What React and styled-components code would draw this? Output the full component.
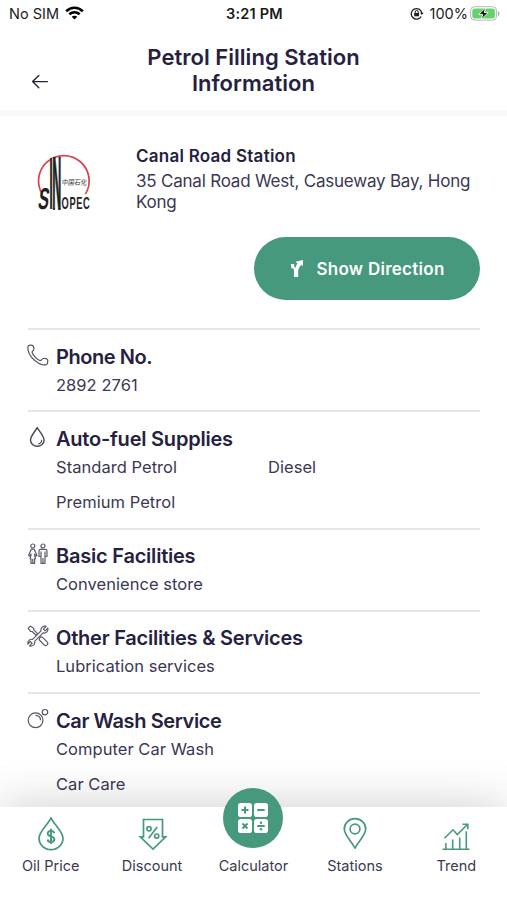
import styled, { createGlobalStyle } from "styled-components"

const GlobalStyle = createGlobalStyle`
	* {
		box-sizing: border-box;
	}
	body {
		margin: 0;
		background: #fff;
		font-family: Inter, "Noto Sans", sans-serif;
		color: #25213f;
	}
	h1, h2, h3, p, ul {
		margin: 0;
		padding: 0;
	}
`

const Screen = styled.div`
	width: 507px;
	height: 900px;
	display: flex;
	flex-direction: column;
	overflow: hidden;
	background: #fff;
`

const StatusBar = styled.div`
	height: 28px;
	flex: none;
	display: grid;
	grid-template-columns: 1fr auto 1fr;
	align-items: center;
	padding: 0 7px 2px 9px;
	font-size: 14.5px;
	color: #1b1b1b;
	.side {
		display: flex;
		align-items: center;
		gap: 6px;
	}
	.right {
		justify-content: flex-end;
		gap: 2px;
	}
	.lock {
		margin-right: 4px;
	}
	.time {
		font-weight: 600;
		letter-spacing: 0.2px;
	}
`

const Header = styled.header`
	height: 88px;
	flex: none;
	display: grid;
	grid-template-columns: 80px 1fr 80px;
	border-bottom: 6px solid #f9f9f9;
	h1 {
		padding-top: 16px;
		text-align: center;
		font-size: 22px;
		line-height: 26px;
		font-weight: 600;
		letter-spacing: 0.03px;
	}
`

const BackButton = styled.button`
	border: none;
	background: none;
	padding: 46px 0 0 31px;
	display: flex;
	align-items: flex-start;
	color: #25213f;
`

const Content = styled.main`
	flex: 1;
	min-height: 0;
	overflow: hidden;
	padding: 0 27px 0 28px;
`

const Station = styled.section`
	display: grid;
	grid-template-columns: 108px 1fr;
	padding-top: 29px;
	height: 121px;
	svg {
		margin: 6px 0 0 7px;
		overflow: visible;
	}
	h2 {
		font-size: 17px;
		line-height: 22px;
		font-weight: 600;
		letter-spacing: 0.25px;
	}
	p {
		margin-top: 4px;
		font-size: 17px;
		line-height: 21px;
		letter-spacing: -0.21px;
		color: #3b3852;
	}
`

const DirectionButton = styled.button`
	display: flex;
	align-items: center;
	justify-content: center;
	gap: 12px;
	width: 226px;
	height: 63px;
	margin: 0 0 28px auto;
	border: none;
	border-radius: 32px;
	background: #46997d;
	color: #fff;
	font-family: inherit;
	font-size: 17px;
	font-weight: 600;
	letter-spacing: 0.27px;
`

const Section = styled.section`
	display: grid;
	grid-template-columns: 28px 1fr;
	border-top: 2px solid #e6e6e7;
	padding: 12.6px 0 11.6px;
	h3 {
		font-size: 20px;
		line-height: 28px;
		font-weight: 600;
		letter-spacing: ${(props) => props.$tracking ?? -0.22}px;
	}
	.icon {
		display: block;
		margin: 1px 0 0 -1px;
	}
`

const Items = styled.ul`
	display: grid;
	grid-template-columns: 1fr 1fr;
	row-gap: 7.3px;
	list-style: none;
	font-size: 16.5px;
	line-height: 28px;
	letter-spacing: 0.04px;
	color: #3b3852;
`

const TabBar = styled.nav`
	height: 93px;
	flex: none;
	position: relative;
	display: grid;
	grid-template-columns: repeat(5, 1fr);
	grid-template-rows: 93px;
	background: #fff;
	box-shadow: 0 0 50px rgba(0, 0, 0, 0.2);
`

const Tab = styled.div`
	display: flex;
	flex-direction: column;
	align-items: center;
	justify-content: flex-end;
	padding-bottom: 24px;
	font-size: 14.5px;
	line-height: 20px;
	color: #3b3852;
	svg {
		flex: none;
		margin-bottom: ${(props) => (props.$raised ? "8px" : "4px")};
	}
`

const green = "#46997d"

const WifiIcon = () => (
	<svg width="19" height="14" viewBox="0 0 19 14" fill="none" stroke="#000" strokeWidth="2.6">
		<path d="M1.2 5.2C6 .5 13 .5 17.8 5.2" />
		<path d="M4.3 8.3c3-2.8 7.4-2.8 10.4 0" />
		<path d="M9.5 13.6 6.7 10.8c1.6-1.5 4-1.5 5.6 0z" fill="#000" stroke="none" />
	</svg>
)

const LockIcon = () => (
	<svg className="lock" width="14" height="13" viewBox="0 0 14 13" fill="none" stroke="#222" strokeWidth="1.3">
		<path d="M11.2 9.5A5.3 5.3 0 1 1 11.8 6" />
		<path d="m10 5.7 1.9 2.2 1.8-2.2z" fill="#222" stroke="none" />
		<path d="M4.2 6h4.9v3.3H4.2z" fill="#222" stroke="none" />
		<path d="M5.2 6.4V5a1.5 1.5 0 0 1 3 0v1.4" strokeWidth="1" />
	</svg>
)

const BatteryIcon = () => (
	<svg width="30" height="15" viewBox="0 0 30 15">
		<rect x=".6" y=".7" width="26" height="13.4" rx="4" fill="#fff" stroke="#b4b6b4" />
		<rect x="2.3" y="2.4" width="22.6" height="10" rx="2.5" fill="#65d36d" />
		<path d="M28 5v5c2-.8 2-4.2 0-5z" fill="#a8aaa8" />
		<path d="M15.7 1.8 8.8 8.3h4l-1.6 4.9 7-6.6h-4z" fill="#000" stroke="#fff" strokeWidth=".9" />
	</svg>
)

const ArrowIcon = () => (
	<svg width="18" height="16" viewBox="0 0 18 16" fill="none" stroke="currentColor" strokeWidth="1.4" strokeLinecap="round" strokeLinejoin="round">
		<path d="M16.4 7.6H1.6M7.8 1.4 1.6 7.6l6.2 6.2" />
	</svg>
)

const SinopecLogo = () => (
	<svg width="56" height="60" viewBox="0 0 56 60">
		<path d="M7.5 43.5A25.3 25.3 0 1 1 50.5 43" fill="none" stroke="#dd4247" strokeWidth="1.7" />
		<path d="M15.5 7h10v46h-10z" fill="#fff" />
		<g fill="#1d1d1d" fontFamily="Liberation Sans" fontWeight="bold" opacity=".98">
			<text transform="translate(14.3 58) scale(.8 4.6)" fontSize="16">I</text>
			<text transform="translate(17.3 58) scale(.78 4.6)" fontSize="16" stroke="#1d1d1d" strokeWidth=".4">N</text>
			<text transform="translate(2.3 58) skewX(-8) scale(.64 1.2)" fontSize="25">S</text>
			<text transform="translate(26.6 58) scale(.58 1)" fontSize="16" letterSpacing="1">OPEC</text>
		</g>
		<text transform="translate(26.5 33.5) skewX(-8)" fontFamily="Noto Sans CJK SC" fontSize="7.2" textLength="25" lengthAdjust="spacingAndGlyphs" fill="#333" opacity=".98">中国石化</text>
	</svg>
)

const DirectionIcon = () => (
	<svg width="15" height="19" viewBox="0 0 15 19" fill="#fff">
		<path d="M14 1v6.2l-1.8-1.5C10.2 8 9.3 9.7 9.2 12v6H5v-5.8C5 10.7 4.7 10 4.1 9.2L2.5 9.4 1.8 5l3.6.3-.4 1.9c.7.7 1 1.2 1.3 2C6.9 7.3 7.5 6 8.5 4.6L6.5 2.7z" />
	</svg>
)

const PhoneIcon = () => (
	<svg className="icon" width="22" height="22" viewBox="0 0 22 22" fill="none" stroke="#555361" strokeWidth="1.2" strokeLinejoin="round">
		<path d="M1.3 1.9C2.3 1 4.9.9 5.7 1.5c.9 1.1 1.3 3.5.9 4.5-.3.8-1.5 1.5-1.6 2.2.6 2.7 5.2 7.5 8.3 8.5 1 .1 1.7-2 3-2.2 1.3-.1 3.9.3 4.3 1.3.4 1.2.1 3.9-1 4.7-1.7 1.1-5.7.1-8.3-1.6C6.7 16.2 2.2 11.2 1.2 6.7.8 4.7.8 2.6 1.3 1.9z" />
	</svg>
)

const DropIcon = () => (
	<svg className="icon" width="22" height="22" viewBox="0 0 22 22" fill="none" stroke="#464354" strokeWidth="1.4">
		<path d="M10.2 1.6C8.5 4.9 3.5 10 3.5 14a6.8 6.3 0 0 0 13.6 0c0-4-5.2-9.1-6.9-12.4z" strokeLinejoin="round" />
		<path d="M14.7 13.8c0 2.3-1.4 3.9-3.6 4.2" strokeWidth="1.1" />
	</svg>
)

const PeopleIcon = () => (
	<svg className="icon" width="22" height="22" viewBox="0 0 22 22" fill="none" stroke="#5d5a68" strokeWidth="1.2" strokeLinejoin="round">
		<circle cx="5.8" cy="3" r="2" />
		<path d="M4.3 6.2h3L10 12.5l-1.2.7-1.3-2 .9 4.6H7.6v4.5H4v-4.5h-.8l.9-4.6-1.3 2-1.2-.7z" />
		<path d="M5.8 15.8v4.5M16 15v5.3" />
		<circle cx="16" cy="3" r="2" />
		<path d="M13.7 6.3h4.6c1.1 0 1.7.7 1.7 1.7v5.5h-2v6.8h-4v-6.8h-2V8c0-1 .6-1.7 1.7-1.7zM14 8.5v5M18 8.5v5" />
	</svg>
)

const ToolsIcon = () => (
	<svg className="icon" width="22" height="22" viewBox="0 0 22 22" fill="none" stroke="#5d5a68" strokeWidth="1.2" strokeLinejoin="round">
		<path d="m1.2 3.1 2-2 3.4 2.2.2 1.6 4 4-1.6 1.6-4-4-1.7-.2z" />
		<path d="m12.3 13.3 1.3-1.5 1.7.3 4.8 4.8c.9.9.9 2 0 2.9s-2.1.9-3 0L12.4 15z" />
		<path d="M19.2 1.3 16.4 4.1l1.7 1.7 2.7-2.7c.6 3-1.5 5.5-4.7 4.8l-8.3 8.3c.5 3.3-2.3 5.6-5.3 4.7l2.6-2.6-1.8-1.8L.9 19c-.6-3 1.9-5.3 4.7-4.6l8.4-8.5c-.5-3 2.1-5.5 5.2-4.6z" fill="#fff" />
	</svg>
)

const BubbleIcon = () => (
	<svg className="icon" width="22" height="22" viewBox="0 0 22 22" fill="none" stroke="#555361" strokeWidth="1.2">
		<circle cx="8.6" cy="12.3" r="7.4" />
		<circle cx="18" cy="4.2" r="2.7" />
		<path d="M8.5 7.3c3-.2 5.2 2.2 5 4.9" />
	</svg>
)

const OilIcon = () => (
	<svg width="28" height="36" viewBox="0 0 28 36" fill="none" stroke={green} strokeWidth="1.7">
		<path d="M14 2.2C11 8.2 2 15.5 2 22.3a12 11.3 0 0 0 24 0C26 15.5 17 8.2 14 2.2z" />
		<path d="M17.3 17.2c-.4-1.6-1.7-2.3-3.3-2.3-2 0-3.3 1-3.3 2.7 0 3.9 6.7 1.9 6.7 5.7 0 1.7-1.4 2.7-3.4 2.7-1.9 0-3.2-.8-3.5-2.5M14 12.7v15.4" strokeWidth="1.9" />
	</svg>
)

const DiscountIcon = () => (
	<svg width="30" height="36" viewBox="0 0 30 36" fill="none" stroke={green} strokeWidth="1.7">
		<path d="M6.5 3.5h19v17.3h3.2L16 33.1 3.3 20.8h3.2z" />
		<circle cx="12" cy="12.7" r="2.1" />
		<circle cx="19.7" cy="20.1" r="2.1" />
		<path d="m20.2 11-8.6 11.3" />
	</svg>
)

const CalculatorIcon = () => (
	<svg width="60" height="60" viewBox="0 0 60 60">
		<circle cx="30" cy="30" r="30" fill={green} />
		<g fill="#fff">
			<rect x="15" y="15" width="14" height="14" rx="2.8" />
			<rect x="31" y="15" width="14" height="14" rx="2.8" />
			<rect x="15" y="31" width="14" height="14" rx="2.8" />
			<rect x="31" y="31" width="14" height="14" rx="2.8" />
		</g>
		<path d="M22 18.5v7M18.5 22h7M34.3 22h7.4M19.5 35.5l5 5M24.5 35.5l-5 5M34.3 38h7.4" stroke={green} strokeWidth="2" />
		<circle cx="38" cy="34.8" r="1.2" fill={green} />
		<circle cx="38" cy="41.2" r="1.2" fill={green} />
	</svg>
)

const PinIcon = () => (
	<svg width="26" height="36" viewBox="0 0 26 36" fill="none" stroke={green} strokeWidth="1.7">
		<path d="M13 32.1C9.5 25 2.3 19.3 2.3 13a10.7 10.3 0 0 1 21.4 0c0 6.3-7.2 12-10.7 19.1z" strokeLinejoin="round" />
		<circle cx="13" cy="13" r="4.9" />
	</svg>
)

const TrendIcon = () => (
	<svg width="28" height="36" viewBox="0 0 28 36" fill="none" stroke={green} strokeWidth="1.6">
		<path d="M.5 33.2h27M3.9 33v-6M10.7 33v-9.5M17.7 33V21.5M24.3 33V15.3" />
		<path d="m2.5 22.3 8.5-8.5 4.3 4.8L25.4 8.5M20.5 8.2h5.3v5" />
	</svg>
)

const sections = [
	{ title: "Phone No.", Icon: PhoneIcon, items: ["2892 2761"], tracking: -0.45 },
	{ title: "Auto-fuel Supplies", Icon: DropIcon, items: ["Standard Petrol", "Diesel", "Premium Petrol"] },
	{ title: "Basic Facilities", Icon: PeopleIcon, items: ["Convenience store"] },
	{ title: "Other Facilities & Services", Icon: ToolsIcon, items: ["Lubrication services"] },
	{ title: "Car Wash Service", Icon: BubbleIcon, items: ["Computer Car Wash", "", "Car Care"], tracking: -0.4 },
]

const tabs = [
	{ label: "Oil Price", Icon: OilIcon },
	{ label: "Discount", Icon: DiscountIcon },
	{ label: "Calculator", Icon: CalculatorIcon, raised: true },
	{ label: "Stations", Icon: PinIcon },
	{ label: "Trend", Icon: TrendIcon },
]

export default function App() {
	return (
		<Screen>
			<GlobalStyle />
			<StatusBar>
				<div className="side">
					<span>No SIM</span>
					<WifiIcon />
				</div>
				<span className="time">3:21 PM</span>
				<div className="side right">
					<LockIcon />
					<span>100%</span>
					<BatteryIcon />
				</div>
			</StatusBar>
			<Header>
				<BackButton aria-label="Back">
					<ArrowIcon />
				</BackButton>
				<h1>
					Petrol Filling Station
					<br />
					Information
				</h1>
			</Header>
			<Content>
				<Station>
					<SinopecLogo />
					<div>
						<h2>Canal Road Station</h2>
						<p>
							35 Canal Road West, Casueway Bay, Hong
							<br />
							Kong
						</p>
					</div>
				</Station>
				<DirectionButton>
					<DirectionIcon />
					Show Direction
				</DirectionButton>
				{sections.map(({ title, Icon, items, tracking }) => (
					<Section key={title} $tracking={tracking}>
						<Icon />
						<div>
							<h3>{title}</h3>
							<Items>
								{items.map((item, i) => (
									<li key={i}>{item}</li>
								))}
							</Items>
						</div>
					</Section>
				))}
			</Content>
			<TabBar>
				{tabs.map(({ label, Icon, raised }) => (
					<Tab key={label} $raised={raised}>
						<Icon />
						{label}
					</Tab>
				))}
			</TabBar>
		</Screen>
	)
}
